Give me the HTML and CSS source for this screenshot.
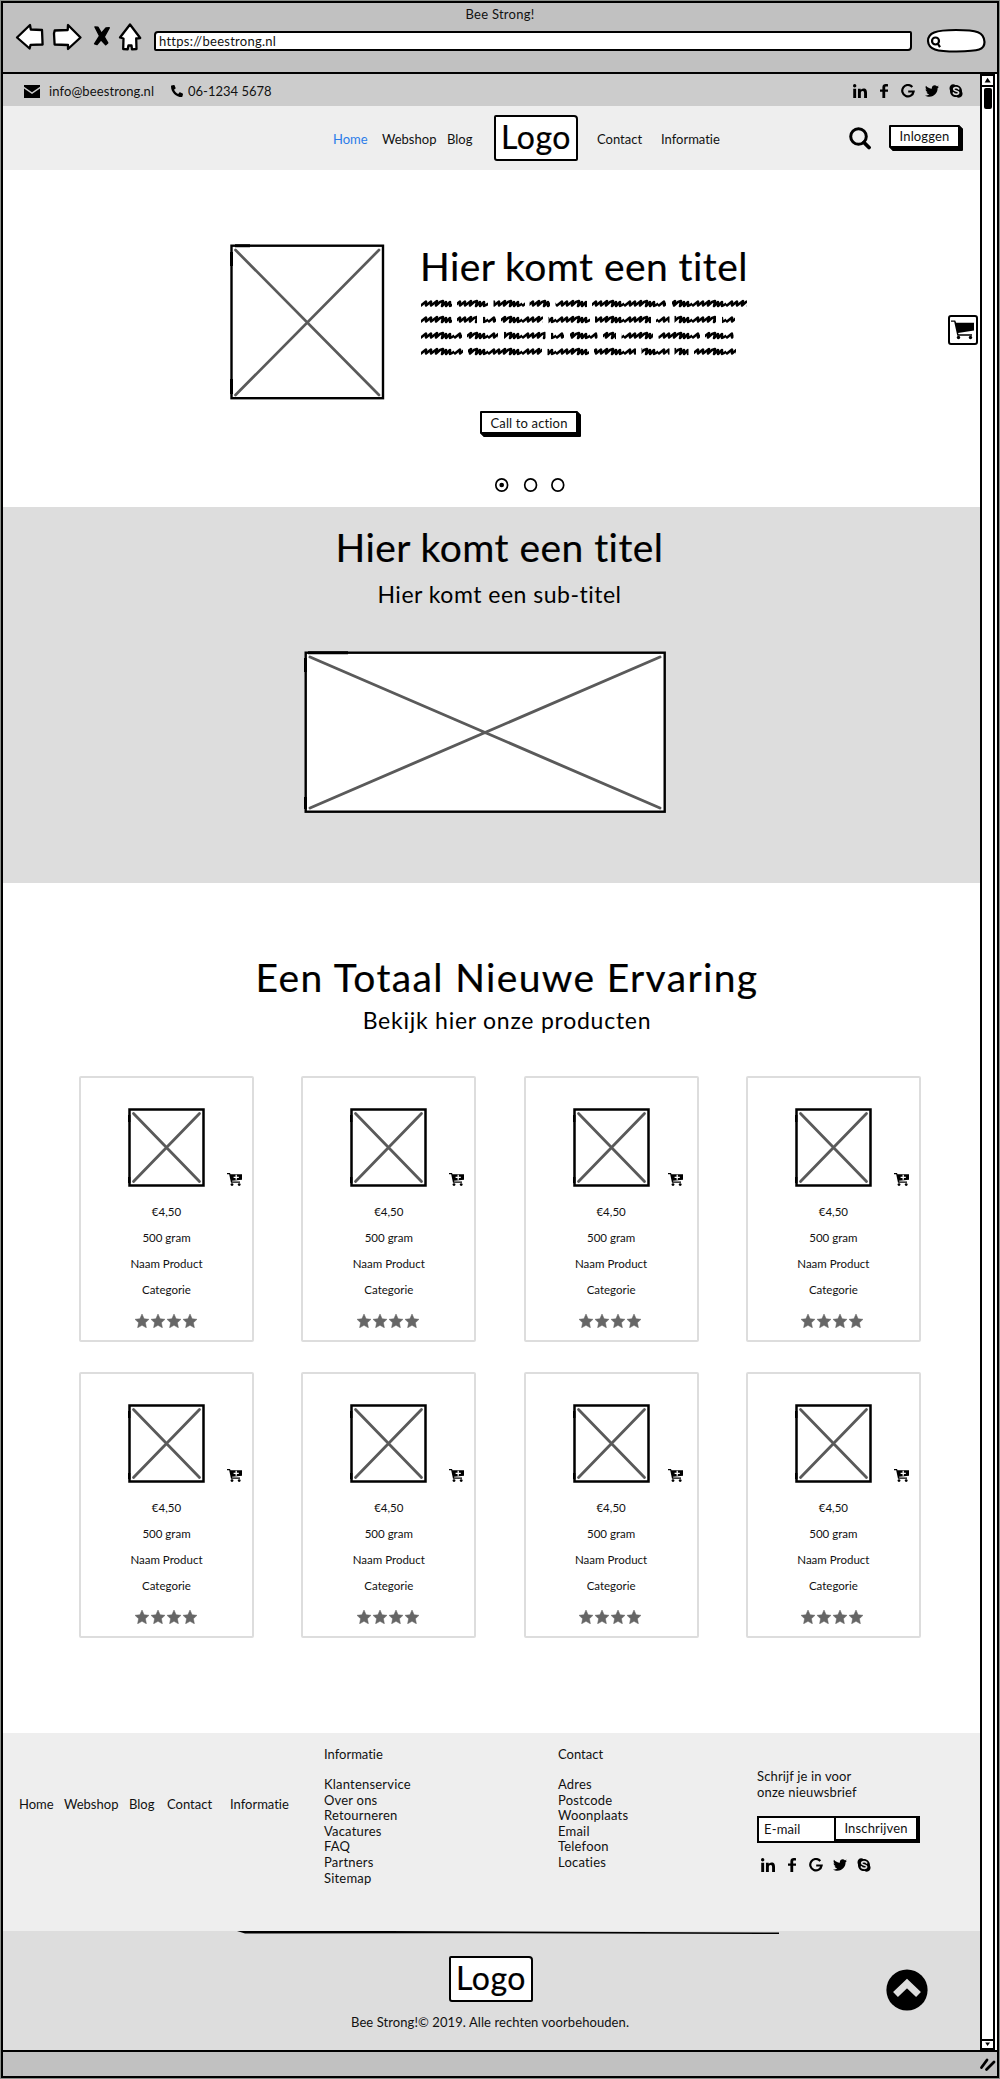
FILE: index.html
```
<!DOCTYPE html>
<html lang="nl">
<head>
<meta charset="utf-8">
<title>Bee Strong!</title>
<link rel="stylesheet" href="styles.css">
</head>
<body>
<svg class="defs" width="0" height="0">
  <defs>
    <symbol id="linkedin" viewBox="0 0 448 448"><path d="M100.28 448H7.4V148.9h92.88zM53.79 108.1C24.09 108.1 0 83.5 0 53.8a53.79 53.79 0 0 1 107.58 0c0 29.7-24.1 54.3-53.79 54.3zM447.9 448h-92.68V302.4c0-34.7-.7-79.2-48.29-79.2-48.29 0-55.69 37.7-55.69 76.7V448h-92.78V148.9h89.08v40.8h1.3c12.4-23.5 42.69-48.3 87.88-48.3 94 0 111.28 61.9 111.28 142.3V448z"/></symbol>
    <symbol id="facebook" viewBox="0 0 14 14"><path d="M11 .3v2.3H9.4c-1 0-1.2.5-1.2 1.2v1.6H11v2.3H8.2V14H5.4V7.7H3V5.4h2.4V3.3C5.4 1.1 6.8 0 8.8 0c1 0 1.8.1 2.2.3z"/></symbol>
    <symbol id="google" viewBox="0 0 14 14"><path d="M11.3 3A5.7 5.7 0 1 0 12.600 7.500H7.200" fill="none" stroke="#000" stroke-width="2.200"/></symbol>
    <symbol id="twitter" viewBox="0 30 512 452"><path d="M459.37 151.716c.325 4.548.325 9.097.325 13.645 0 138.72-105.583 298.558-298.558 298.558-59.452 0-114.68-17.219-161.137-47.106 8.447.974 16.568 1.299 25.34 1.299 49.055 0 94.213-16.568 130.274-44.832-46.132-.975-84.792-31.188-98.112-72.772 6.498.974 12.995 1.624 19.818 1.624 9.421 0 18.843-1.3 27.614-3.573-48.081-9.747-84.143-51.98-84.143-102.985v-1.299c13.969 7.797 30.214 12.67 47.431 13.319-28.264-18.843-46.781-51.005-46.781-87.391 0-19.492 5.197-37.36 14.294-52.954 51.655 63.675 129.3 105.258 216.365 109.807-1.624-7.797-2.599-15.918-2.599-24.04 0-57.828 46.782-104.934 104.934-104.934 30.213 0 57.502 12.67 76.67 33.137 23.715-4.548 46.456-13.32 66.599-25.34-7.798 24.366-24.366 44.833-46.132 57.827 21.117-2.273 41.584-8.122 60.426-16.243-14.292 20.791-32.161 39.308-52.628 54.253z"/></symbol>
    <symbol id="skype" viewBox="0 0 14 14"><path d="M4.200.3c1 0 1.700.4 2.100.6C10 .6 13.300 3.500 13 7.700c1.500 2.800-.2 6-3.200 6-1 0-1.600-.3-2.100-.6C3.800 13.400.7 10.300 1 6.400-.4 3.500 1.300.3 4.200.3z"/><path d="M9.700 4.900C9 3.200 4.700 3.100 4.700 5.200c0 2.200 5 1.300 5 3.600 0 2.200-4.700 2-5.400.1" fill="none" stroke="#ddd" stroke-width="1.600" stroke-linecap="round"/></symbol>
    <symbol id="star" viewBox="0 0 14 14"><path d="M7 0l2.100 4.700 4.900.6-3.600 3.400 1 5.100L7 11.300l-4.400 2.500 1-5.100L0 5.300l4.900-.6z" stroke="#666" stroke-width=".5"/></symbol>
    <symbol id="cart-add" viewBox="0 0 15 13"><path d="M0 0h3l.5 1.300H15v5.500L5 7.700l.3.900H13v1.200H4L2.200 1.200H0z"/><circle cx="5" cy="11.600" r="1.400"/><circle cx="12.200" cy="11.600" r="1.400"/><path d="M6.600 4.300h5.200M9.200 1.800v5" stroke="#fff" stroke-width="1.300"/></symbol>
    <symbol id="stars" viewBox="0 0 64 14"><use href="#star" width="14" height="14"/><use href="#star" x="16" width="14" height="14"/><use href="#star" x="32" width="14" height="14"/><use href="#star" x="48" width="14" height="14"/></symbol>
    <symbol id="photo" viewBox="0 0 77 79"><rect x="1.500" y="1.500" width="74" height="76" fill="#fff" stroke="#000" stroke-width="2.500"/><path d="M1.200 7v7M1.200 69v6" stroke="#000" stroke-width="2.400"/><path d="M5.500 5.500l66 68m0-68l-66 68" stroke="#5a5a5a" stroke-width="2.800" stroke-linecap="round"/></symbol>
  </defs>
</svg>
<div class="window">
  <header class="chrome">
    <div class="window-title"><span>Bee Strong!</span></div>
    <div class="toolbar">
      <svg class="tools" width="130" height="34" viewBox="12 20 130 34" fill="#fff" stroke="#000" stroke-width="2.300" stroke-linejoin="round">
        <path d="M17 37.500L30 25l.8 4.500L42 30l.6 14.500-12 .3-1 3.700z"/>
        <path d="M80.500 37.500L68 25l-.3 5-13 .5-.7 3 .6 11L68 45v4z"/>
        <path d="M95 27l3 .3 3.500 6L106 28l3.200-.2-5 9.200 3.500 6-2 1.700-4.700-5-4 4.700-2.400-.6 5-7.800z" fill="#000" stroke-width="1.500"/>
        <path d="M130 24.500L120 37.500l3.500 1-.3 10.500 4.500.3.800-4 3 .2.500 3.800 4.500-.3-.3-10.500 4-.5z"/>
      </svg>
      <div class="address"><span>https://beestrong.nl</span></div>
      <svg class="search-pill" width="62" height="28" viewBox="926 27 62 28" fill="#fff" stroke="#000" stroke-width="2.200"><path d="M929 41c0-8 7-11 28-11 21 0 28 2 28.500 12 0 8-5 9-28 9.500-20 0-28-2-28.500-10.500z"/><circle cx="936.500" cy="41" r="3.500"/><path d="M939 44l2 3.200"/></svg>
    </div>
  </header>
  <div class="viewport">
    <main class="page">
      <div class="contact-bar">
        <svg class="mail" width="16" height="13" viewBox="0 0 16 13"><path d="M0 0h16v1.800L8 7.300 0 1.800zM0 3.600l8 5.400 8-5.400V13H0z"/></svg>
        <a class="mail-link">info@beestrong.nl</a>
        <svg class="phone" width="12" height="12" viewBox="0 0 512 512"><path transform="matrix(-1 0 0 1 512 0)" d="M493.400 24.600l-104-24c-11.300-2.600-22.900 3.300-27.500 13.900l-48 112c-4.200 9.800-1.400 21.300 6.900 28l60.600 49.600c-36 76.700-98.900 140.500-177.200 177.200l-49.600-60.600c-6.800-8.300-18.200-11.100-28-6.900l-112 48C3.900 366.500-2 378.100.6 389.400l24 104C27.100 504.200 36.700 512 48 512c256.100 0 464-207.500 464-464 0-11.200-7.700-20.900-18.600-23.400z"/></svg>
        <a>06-1234 5678</a>
        <div class="social social-top"><svg><use href="#linkedin"/></svg><svg><use href="#facebook"/></svg><svg><use href="#google"/></svg><svg><use href="#twitter"/></svg><svg><use href="#skype"/></svg></div>
      </div>
      <nav class="nav">
        <a class="active">Home</a><a>Webshop</a><a>Blog</a>
        <div class="logo">Logo</div>
        <a>Contact</a><a>Informatie</a>
        <svg class="search" width="22" height="23" viewBox="0 0 22 23" fill="none" stroke="#000"><circle cx="9.500" cy="9.500" r="7.800" stroke-width="3"/><path d="M15 15.500l5 5" stroke-width="3.800" stroke-linecap="round"/></svg>
        <button class="btn login"><span>Inloggen</span></button>
      </nav>
      <section class="hero">
        <div class="hero-body">
          <svg class="hero-photo" width="155" height="156" viewBox="0 0 155 156"><rect x="1.500" y="1.700" width="151.500" height="152.500" fill="#fff" stroke="#000" stroke-width="2.400"/><path d="M1.500 8v14M1.500 135v15M5 1.700h15" stroke="#000" stroke-width="3"/><path d="M5.500 6l143.500 145m0-145L5.500 151" stroke="#5a5a5a" stroke-width="2.700" stroke-linecap="round"/></svg>
          <div class="hero-text">
            <h1 class="display">Hier komt een titel</h1>
            <svg class="scribble" width="330" height="64" viewBox="0 0 330 64">
              <defs><pattern id="scrawl" width="34" height="16" patternUnits="userSpaceOnUse"><path d="M-2 9L1 10.500 6 6.500 6 10.500 11 6.500 11 10.500 17 6 16 10.500 20 7 23 6 22 11 26 7 26 11 30 7 30 11 36 8" fill="none" stroke="#000" stroke-width="2.500" stroke-linejoin="round"/></pattern></defs>
              <path stroke="url(#scrawl)" stroke-width="10" fill="none" d="M1 8H32M37 8H68M73.500 8H105M109.500 8H130M135.500 8H167M172 8H246M252 8H327M1 24H32M37 24H57M63 24H76M81 24H123M128.500 24H170M175 24H231M236 24H249.500M254.500 24H296M302 24H315M1 40H42M47 40H78M84 40H125.500M131 40H144M150 40H177.500M183 40H196M201.500 40H233M238.500 40H280M285 40H313.500M1 56H43M48 56H122M127.500 56H169M174 56H216M221.500 56H249.500M254.500 56H268.500M274 56H316"/>
            </svg>
          </div>
        </div>
        <button class="btn cta"><span>Call to action</span></button>
        <svg class="dots" width="72" height="16" viewBox="0 0 72 16" fill="#fff" stroke="#000" stroke-width="1.700"><ellipse cx="7.700" cy="8" rx="5.900" ry="6.200"/><ellipse cx="36.600" cy="8" rx="5.900" ry="6.200"/><ellipse cx="63.800" cy="8" rx="5.900" ry="6.200"/><circle cx="7.700" cy="8" r="1.500" fill="#000"/></svg>
        <div class="cart-button"><svg width="24" height="20" viewBox="0 0 24 20"><path d="M0 .5h4.200l1 2.300H23v7.700L7 13l.6 1.300H21v1.400H6.300L3.200 1.800H0z"/><circle cx="7.500" cy="17.500" r="1.700"/><circle cx="19.500" cy="17.500" r="1.700"/></svg></div>
      </section>
      <section class="feature">
        <h2 class="display">Hier komt een titel</h2>
        <p class="subtitle">Hier komt een sub-titel</p>
        <svg class="feature-photo" width="363" height="163" viewBox="0 0 363 163"><rect x="1.700" y="1.700" width="359" height="159" fill="#fff" stroke="#000" stroke-width="2.400"/><path d="M1.500 7v14M1.500 146v12M4 1.700h40" stroke="#000" stroke-width="3"/><path d="M6 6l350 151m0-151L6 157" stroke="#5a5a5a" stroke-width="2.900" stroke-linecap="round"/></svg>
      </section>
      <section class="products">
        <h2 class="display">Een Totaal Nieuwe Ervaring</h2>
        <p class="subtitle">Bekijk hier onze producten</p>
        <div class="grid">
          <article class="card"><div class="media"><svg class="photo"><use href="#photo"/></svg><svg class="add"><use href="#cart-add"/></svg></div><p class="price">€4,50</p><p>500 gram</p><p>Naam Product</p><p>Categorie</p><svg class="stars"><use href="#stars"/></svg></article>
          <article class="card"><div class="media"><svg class="photo"><use href="#photo"/></svg><svg class="add"><use href="#cart-add"/></svg></div><p class="price">€4,50</p><p>500 gram</p><p>Naam Product</p><p>Categorie</p><svg class="stars"><use href="#stars"/></svg></article>
          <article class="card tight"><div class="media"><svg class="photo"><use href="#photo"/></svg><svg class="add"><use href="#cart-add"/></svg></div><p class="price">€4,50</p><p>500 gram</p><p>Naam Product</p><p>Categorie</p><svg class="stars"><use href="#stars"/></svg></article>
          <article class="card"><div class="media"><svg class="photo"><use href="#photo"/></svg><svg class="add"><use href="#cart-add"/></svg></div><p class="price">€4,50</p><p>500 gram</p><p>Naam Product</p><p>Categorie</p><svg class="stars"><use href="#stars"/></svg></article>
          <article class="card"><div class="media"><svg class="photo"><use href="#photo"/></svg><svg class="add"><use href="#cart-add"/></svg></div><p class="price">€4,50</p><p>500 gram</p><p>Naam Product</p><p>Categorie</p><svg class="stars"><use href="#stars"/></svg></article>
          <article class="card"><div class="media"><svg class="photo"><use href="#photo"/></svg><svg class="add"><use href="#cart-add"/></svg></div><p class="price">€4,50</p><p>500 gram</p><p>Naam Product</p><p>Categorie</p><svg class="stars"><use href="#stars"/></svg></article>
          <article class="card tight"><div class="media"><svg class="photo"><use href="#photo"/></svg><svg class="add"><use href="#cart-add"/></svg></div><p class="price">€4,50</p><p>500 gram</p><p>Naam Product</p><p>Categorie</p><svg class="stars"><use href="#stars"/></svg></article>
          <article class="card"><div class="media"><svg class="photo"><use href="#photo"/></svg><svg class="add"><use href="#cart-add"/></svg></div><p class="price">€4,50</p><p>500 gram</p><p>Naam Product</p><p>Categorie</p><svg class="stars"><use href="#stars"/></svg></article>
        </div>
      </section>
      <footer>
        <div class="footer-main">
          <nav class="footer-nav"><a>Home</a><a>Webshop</a><a>Blog</a><a>Contact</a><a>Informatie</a></nav>
          <div class="links"><h3>Informatie</h3><a>Klantenservice</a><a>Over ons</a><a>Retourneren</a><a>Vacatures</a><a>FAQ</a><a>Partners</a><a>Sitemap</a></div>
          <div class="links"><h3>Contact</h3><a>Adres</a><a>Postcode</a><a>Woonplaats</a><a>Email</a><a>Telefoon</a><a>Locaties</a></div>
          <div class="newsletter">
            <p>Schrijf je in voor<br>onze nieuwsbrief</p>
            <div class="signup"><div class="field">E-mail</div><div class="submit">Inschrijven</div></div>
            <div class="social"><svg><use href="#linkedin"/></svg><svg><use href="#facebook"/></svg><svg><use href="#google"/></svg><svg><use href="#twitter"/></svg><svg><use href="#skype"/></svg></div>
          </div>
        </div>
        <div class="footer-bottom">
          <svg class="rule" width="542" height="4" viewBox="0 0 542 4"><path d="M0 0h150l392 1.500v1.500L200 2.200 8 2.500z"/></svg>
          <div class="logo">Logo</div>
          <p>Bee Strong!© 2019. Alle rechten voorbehouden.</p>
          <svg class="to-top" width="42" height="42" viewBox="0 0 42 42"><circle cx="21" cy="21" r="20.600"/><path d="M9.500 25.500L21 14.500l11.500 11" fill="none" stroke="#ddd" stroke-width="7"/></svg>
        </div>
      </footer>
    </main>
    <aside class="scrollbar">
      <svg class="arrow" width="13" height="11" viewBox="0 0 13 11"><path d="M6.500 2L10.500 8H3z"/></svg>
      <div class="thumb"></div>
      <svg class="arrow down" width="13" height="11" viewBox="0 0 13 11"><path d="M6.500 8L10.500 2.500H3z"/></svg>
    </aside>
  </div>
  <div class="status"><svg width="18" height="16" viewBox="0 0 18 16" stroke="#000" stroke-width="2.800" stroke-linecap="round"><path d="M2.500 11.500L8 4M7.500 13.500L15 6"/></svg></div>
</div>
</body>
</html>
```
FILE: styles.css
```
* { box-sizing: border-box; }
body { margin: 0; font: 13px/16px Lato, "Open Sans", sans-serif; font-variant-ligatures: none; color: #111; background: #fff; }
h1, h2, h3, p { margin: 0; font-weight: 400; }
svg { display: block; flex: none; }
a, span { white-space: nowrap; }
.defs { position: absolute; }
.window { height: 2079px; border: 1px solid #8b8f8b; border-bottom-width: 2px; display: flex; flex-direction: column; outline: 2px solid #000; outline-offset: -3px; padding: 2px 2px 1px; }

.chrome { height: 71px; background: #c1c1c1; border-bottom: 2px solid #000; flex: none; letter-spacing: .25px; }
.window-title { text-align: center; height: 17px; padding-top: 3px; }
.toolbar { display: flex; padding-left: 9px; }
.address { margin: 11px 0 0 12px; width: 758px; height: 20px; background: #fff; border: 2px solid #000; border-radius: 4px 2px 4px 2px; padding-left: 3px; line-height: 17px; }
.search-pill { margin: 7px 0 0 13px; }

.viewport { display: flex; flex: 1; min-height: 0; }
.page { width: 977px; flex: none; }
.contact-bar { height: 32px; background: #ccc; display: flex; align-items: center; padding: 2px 0 0 21px; }
.mail { margin-right: 9px; }
.mail-link { width: 122px; letter-spacing: .1px; }
.phone { margin-right: 5px; }
.social { display: flex; gap: 10px; }
.social svg { width: 14px; height: 14px; }
.social-top { margin: 0 17px 0 auto; }

.nav { height: 64px; background: #eee; display: grid; grid-template-columns: 49px 65px 47px 103px 64px 188px 40px 74px; padding-left: 330px; align-items: center; }
.nav > a { padding-top: 2px; }
.nav .active { color: #2b7ce9; }
.logo { width: 84px; height: 46px; background: #fff; border: 2.500px solid #000; border-radius: 2px 4px 2px 3px; font-size: 32px; line-height: 39px; text-align: center; letter-spacing: .5px; color: #000; -webkit-text-stroke: .2px #000; }
.btn { display: block; font: inherit; color: #111; background: #fff; border: 2px solid #000; box-shadow: 1px 1px #000, 2px 2px #000, 3px 3px #000; padding: 0; height: 23px; border-radius: 1px; letter-spacing: .15px; }
.login { width: 71px; margin-top: -4px; }

.hero { height: 337px; position: relative; padding: 74px 0 0 227px; }
.hero-body { display: flex; gap: 35px; }
.display { font-size: 39px; line-height: 44px; color: #000; white-space: nowrap; letter-spacing: .45px; -webkit-text-stroke: .2px #000; }
.scribble { margin-top: 7px; }
.cta { width: 98px; margin: 11px 0 0 250px; }
.dots { margin: 43px 0 0 264px; }
.cart-button { position: absolute; left: 945px; top: 145px; width: 30px; height: 30px; border: 2px solid #000; border-radius: 3px; display: grid; place-items: center; background: #fff; }

.feature { height: 376px; background: #ddd; display: flex; flex-direction: column; align-items: center; padding-top: 18px; }
.subtitle { font-size: 23px; line-height: 28px; color: #000; white-space: nowrap; letter-spacing: .5px; }
.feature .display, .feature .subtitle { margin-left: 16px; }
.feature .subtitle { margin-top: 11px; }
.feature-photo { margin: 43px 0 0 -13px; }

.products { height: 850px; padding: 72px 0 0 76px; }
.products .display, .products .subtitle { text-align: center; width: 856px; }
.products .display { letter-spacing: 1.350px; }
.products .subtitle { margin-top: 7px; letter-spacing: .750px; }
.grid { display: grid; grid-template-columns: repeat(4, 175px); column-gap: 47.300px; row-gap: 30px; margin-top: 42px; }
.card { height: 266px; border: 2.500px solid #ddd; border-radius: 2px; padding-top: 30px; font-size: 11.500px; text-align: center; }
.media { display: flex; align-items: flex-end; padding-left: 47px; }
.photo { width: 77px; height: 79px; }
.add { width: 15px; height: 13px; margin-left: 22px; margin-bottom: 1px; }
.tight .add { margin-left: 18px; }
.card p { line-height: 26px; }
.card .price { margin-top: 12px; }
.stars { width: 64px; height: 14px; margin: 11px auto 0; fill: #666; }

.footer-main { height: 198px; background: #eee; display: grid; grid-template-columns: 305px 234px 199px 170px; padding-left: 16px; }
.footer-nav { display: grid; grid-template-columns: 45px 65px 38px 63px 60px; padding-top: 63px; }
.links { display: flex; flex-direction: column; padding-top: 13px; line-height: 15.600px; letter-spacing: .2px; }
.links h3 { font-size: 13px; line-height: 16px; margin-bottom: 15px; letter-spacing: 0; }
.newsletter { padding-top: 35px; letter-spacing: .15px; }
.signup { display: flex; width: 163px; height: 27px; margin: 16px 0 15px; background: #fff; border: 2px solid #000; }
.field { width: 75px; padding-left: 5px; line-height: 22px; }
.submit { flex: 1; border: solid #000; border-width: 0 2px 2px 2px; line-height: 21px; text-align: center; }
.newsletter .social { margin-left: 4px; }
.footer-bottom { height: 119px; background: #ddd; position: relative; padding-left: 234px; }
.footer-bottom .logo { margin: 21px 0 0 212px; }
.footer-bottom p { margin: 12px 0 0 114px; letter-spacing: .080px; }
.to-top { position: absolute; left: 883px; top: 38px; }

.scrollbar { width: 15px; border: 2px solid #000; border-width: 2px 2px 0; background: #fff; display: flex; flex-direction: column; align-items: center; }
.arrow { border-bottom: 2px solid #000; }
.thumb { width: 8px; height: 21px; margin-top: 1px; border-radius: 2px; background: #000; }
.arrow.down { margin-top: auto; border-top: 2px solid #000; }
.status { height: 26px; flex: none; background: #c1c1c1; border-top: 2px solid #000; display: flex; justify-content: flex-end; align-items: center; }
```
